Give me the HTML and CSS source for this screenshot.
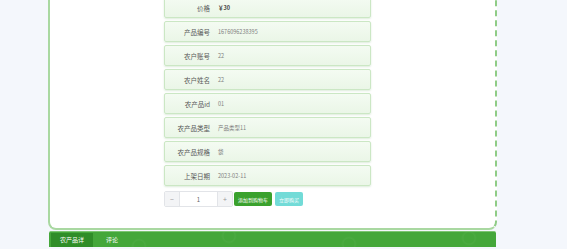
FILE: index.html
```html
<!DOCTYPE html>
<html lang="zh">
<head>
    <meta charset="UTF-8">
    <meta name="viewport" content="width=device-width, initial-scale=1.0">
    <title>农产品详情</title>
    <link rel="stylesheet" href="styles.css">
</head>
<body>

<div class="detail-panel">
    <div class="info-list">
        <div class="info-row"><span class="info-label">价格</span><span class="info-value price">￥30</span></div>
        <div class="info-row"><span class="info-label">产品编号</span><span class="info-value">1676096238395</span></div>
        <div class="info-row"><span class="info-label">农户账号</span><span class="info-value">22</span></div>
        <div class="info-row"><span class="info-label">农户姓名</span><span class="info-value">22</span></div>
        <div class="info-row"><span class="info-label">农产品id</span><span class="info-value">01</span></div>
        <div class="info-row"><span class="info-label">农产品类型</span><span class="info-value">产品类型11</span></div>
        <div class="info-row"><span class="info-label">农产品规格</span><span class="info-value">袋</span></div>
        <div class="info-row"><span class="info-label">上架日期</span><span class="info-value">2023-02-11</span></div>
    </div>

    <div class="buy-bar">
        <div class="counter">
            <button class="counter-btn">−</button>
            <input class="counter-input" type="text" value="1">
            <button class="counter-btn">+</button>
        </div>
        <button class="button button-cart">添加到购物车</button>
        <button class="button button-buy">立即购买</button>
    </div>
</div>

<div class="tab-bar">
    <span class="tab tab-active">农产品详情</span>
    <span class="tab">评论</span>
</div>

</body>
</html>
```

FILE: styles.css
```css
body {
    font-family: "Noto Sans CJK SC", "Noto Sans", sans-serif;
    background-color: #f4f7fc;
    margin: 0;
    overflow: hidden;
}

.detail-panel {
    width: 445px;
    margin-left: 48px;
    margin-top: -3px;
    padding-bottom: 21px;
    background-color: #fff;
    border-left: 2px solid #a9d8a1;
    border-right: 2px dashed #8fcc86;
    border-bottom: 2px solid #a9d8a1;
    border-radius: 0 0 8px 8px;
}

.info-list {
    display: flex;
    flex-direction: column;
    gap: 3px;
    width: 207px;
    margin-left: 114px;
}

.info-row {
    display: flex;
    align-items: center;
    gap: 8px;
    height: 19px;
    border: 1px solid #cbe7c4;
    border-radius: 2px;
    background: linear-gradient(to bottom, #f4fbf2, #eaf6e7);
    box-shadow: 0 1px 2px rgba(120, 180, 110, 0.25);
}

.info-label {
    width: 45px;
    text-align: right;
    color: #5a5a5a;
    font-size: 6.5px;
    line-height: 8px;
}

.info-value {
    color: #808080;
    font-size: 5.5px;
    line-height: 8px;
}

.price {
    color: #444;
    font-weight: bold;
}

.buy-bar {
    display: flex;
    align-items: center;
    gap: 1px;
    margin-left: 114px;
    margin-top: 5px;
}

.counter {
    display: flex;
    height: 14px;
    border: 1px solid #e2e4e8;
    border-radius: 2px;
    overflow: hidden;
}

.counter-btn {
    width: 14px;
    padding: 0;
    border: none;
    background-color: #f3f4f6;
    color: #999;
    font-size: 7px;
    font-family: inherit;
}

.counter-input {
    width: 37px;
    padding: 0;
    border: none;
    border-left: 1px solid #e2e4e8;
    border-right: 1px solid #e2e4e8;
    text-align: center;
    font-size: 6px;
    color: #666;
    font-family: inherit;
}

.button {
    height: 14px;
    padding: 0 3px;
    border: none;
    border-radius: 2px;
    color: #fff;
    font-size: 5px;
    font-family: inherit;
}

.button-cart {
    width: 38px;
    background-color: #3aa12d;
}

.button-buy {
    width: 28px;
    margin-left: 2px;
    background-color: #72dbd7;
}

.tab-bar {
    display: flex;
    align-items: center;
    gap: 4px;
    width: 445px;
    height: 15px;
    margin-left: 49px;
    margin-top: 1px;
    padding-left: 2px;
    border-top: 1px solid #7cc472;
    border-radius: 2px 2px 0 0;
    background-color: #44a73a;
    background-image:
        radial-gradient(circle at 90px 14px, transparent 5px, rgba(255, 255, 255, 0.04) 6px, transparent 8px),
        radial-gradient(circle at 180px 4px, transparent 5px, rgba(255, 255, 255, 0.04) 6px, transparent 8px),
        radial-gradient(circle at 300px 12px, transparent 5px, rgba(255, 255, 255, 0.04) 6px, transparent 8px),
        radial-gradient(circle at 420px 6px, transparent 5px, rgba(255, 255, 255, 0.04) 6px, transparent 8px);
}

.tab {
    padding: 0 9px;
    height: 14px;
    line-height: 14px;
    color: #fff;
    font-size: 6px;
}

.tab-active {
    width: 24px;
    background-color: #2f8d28;
}
```
